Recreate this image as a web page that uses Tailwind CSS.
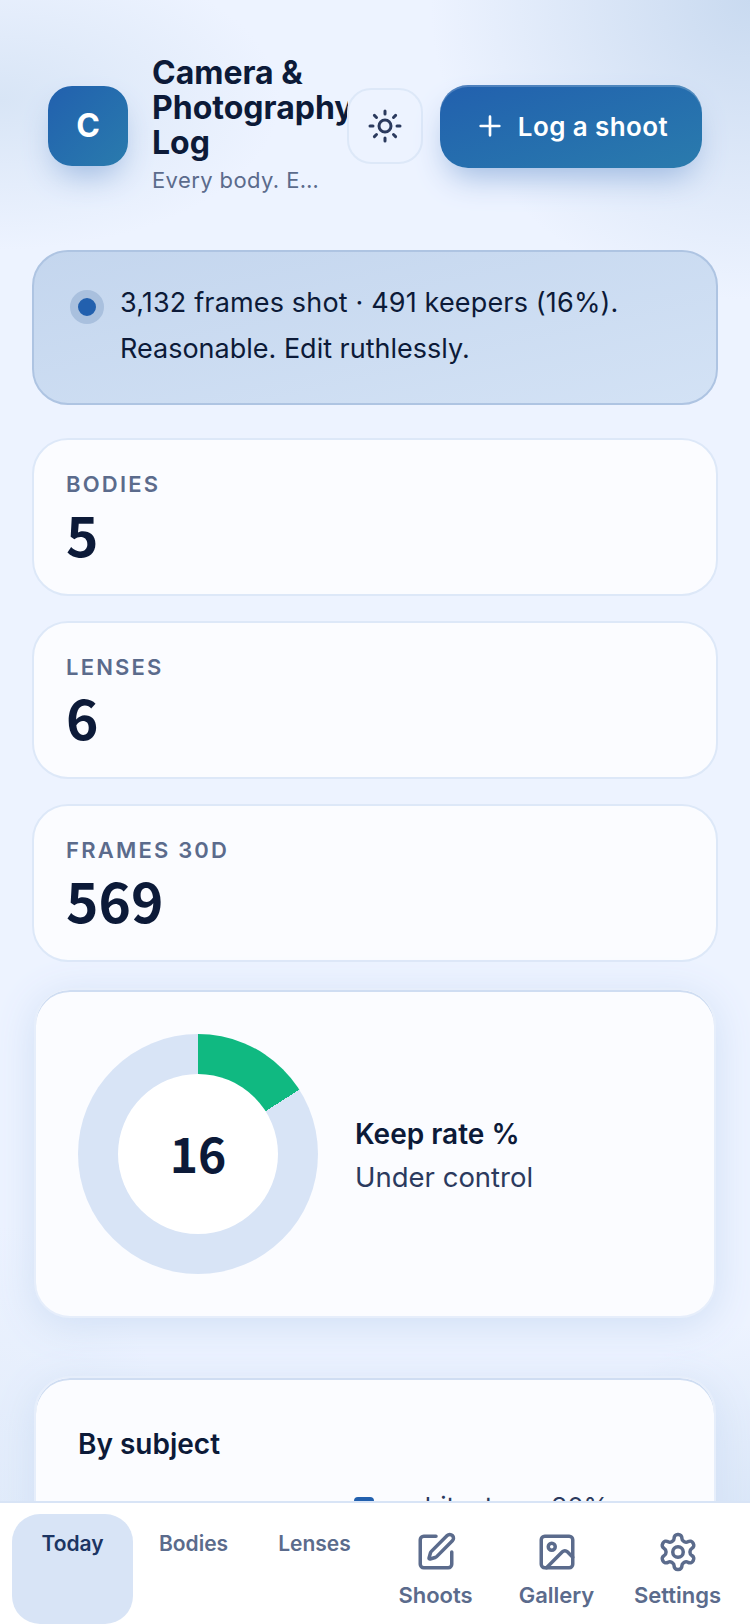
<!doctype html>
<html><head><meta charset="utf-8"><script src="https://cdn.jsdelivr.net/npm/@tailwindcss/browser@4"></script></head>
<body class="m-0">
<div class="relative w-[750px] h-[1624px] overflow-hidden bg-[#edf3ff] font-['Inter',sans-serif] text-[#0c1a38]">
  <div class="absolute inset-0 bg-[radial-gradient(320px_300px_at_100%_0%,#c9daf0_0%,#edf3ff00_100%),radial-gradient(280px_150px_at_0%_100px,#d8e5f6_0%,#edf3ff00_100%),radial-gradient(200px_300px_at_100%_100%,#cfdff3_0%,#edf3ff00_100%),radial-gradient(200px_400px_at_0%_100%,#dce8f8_0%,#edf3ff00_100%)]"></div>
  <main class="relative px-8 pt-[64px] flex flex-col">
    <header class="flex items-center h-[124px] pl-4">
      <div class="w-20 h-20 shrink-0 rounded-3xl bg-gradient-to-br from-[#2260ae] to-[#2a7bad] text-white flex items-center justify-center text-[32px] font-bold shadow-[0_16px_32px_-8px_#9cb8e0]">C</div>
      <div class="w-[196px] shrink-0 ml-6 overflow-hidden">
        <h1 class="text-[32px] leading-[35.2px] font-bold">Camera &amp; <span class="whitespace-nowrap">Photography</span> Log</h1>
        <p class="text-[22px] leading-[33px] tracking-[0.4px] text-[#5b6b8c] mt-1">Every body. E…</p>
      </div>
      <button class="w-[76px] h-[76px] shrink-0 -ml-[1px] rounded-3xl border-2 border-[#dde8f8] flex items-center justify-center text-[#2b3a5e]">
        <svg class="w-9 h-9" viewBox="0 0 24 24" fill="none" stroke="currentColor" stroke-width="2" stroke-linecap="round"><circle cx="12" cy="12" r="4"/><path d="M12 2v2M12 20v2M4.93 4.93l1.41 1.41M17.66 17.66l1.41 1.41M2 12h2M20 12h2M6.34 17.66l-1.41 1.41M19.07 4.93l-1.41 1.41"/></svg>
      </button>
      <button class="w-[262px] h-[83px] shrink-0 ml-[17px] rounded-[28px] bg-gradient-to-br from-[#2260ae] to-[#2a7bad] text-white flex items-center justify-center gap-3 text-[26px] tracking-[0.4px] font-semibold shadow-[inset_0_2px_0_#ffffff33,0_16px_32px_-8px_#9cb8e0]">
        <svg class="w-8 h-8" viewBox="0 0 24 24" fill="none" stroke="currentColor" stroke-width="2" stroke-linecap="round"><path d="M5 12h14M12 5v14"/></svg>
        <span>Log a shoot</span>
      </button>
    </header>
    <section class="mt-[62px] h-[155px] rounded-[36px] border-2 border-[#aec4e2] bg-gradient-to-br from-[#c4d6ee] to-[#d3e2f5] pl-[36px] pr-8 pt-[28px] flex gap-4">
      <span class="w-[34px] h-[34px] mt-[10px] shrink-0 rounded-full bg-[#2260ae] border-[8px] border-[#a9c0de]"></span>
      <p class="text-[27px] leading-[46px]"><span class="tracking-[0.16px]">3,132 frames shot · 491 keepers (16%).</span> Reasonable. Edit ruthlessly.</p>
    </section>
    <section class="mt-[33px] flex flex-col gap-[25px]">
      <div class="h-[158px] rounded-[36px] border-2 border-[#dde8f8] bg-[#fbfcff] px-8 pt-[30px]">
        <div class="text-[22px] leading-[28px] font-semibold tracking-[2.2px] text-[#5b6b8c]">BODIES</div>
        <div class="font-['Noto_Sans_CJK_SC',sans-serif] text-[55px] leading-[70px] font-bold">5</div>
      </div>
      <div class="h-[158px] rounded-[36px] border-2 border-[#dde8f8] bg-[#fbfcff] px-8 pt-[30px]">
        <div class="text-[22px] leading-[28px] font-semibold tracking-[2.2px] text-[#5b6b8c]">LENSES</div>
        <div class="font-['Noto_Sans_CJK_SC',sans-serif] text-[55px] leading-[70px] font-bold">6</div>
      </div>
      <div class="h-[158px] rounded-[36px] border-2 border-[#dde8f8] bg-[#fbfcff] px-8 pt-[30px]">
        <div class="text-[22px] leading-[28px] font-semibold tracking-[2.2px] text-[#5b6b8c]">FRAMES 30D</div>
        <div class="font-['Noto_Sans_CJK_SC',sans-serif] text-[55px] leading-[70px] font-bold">569</div>
      </div>
    </section>
    <section class="mt-[26px] mx-[2px] h-[330px] rounded-[36px] bg-[#fbfcff] border-2 border-[#e6eefb] pt-[2px] shadow-[inset_0_2px_0_#cfddf2,0_8px_40px_#d0dff5] flex items-center pl-[42px] gap-[37px]">
      <div class="w-60 h-60 rounded-full shrink-0 bg-[conic-gradient(#10b981_0_16%,#d8e4f6_16%_100%)] flex items-center justify-center">
        <div class="w-40 h-40 rounded-full bg-white flex items-center justify-center font-['Noto_Sans_CJK_SC',sans-serif] text-[48px] leading-[48px] pb-1 font-bold">16</div>
      </div>
      <div class="mt-[3px]">
        <div class="text-[28px] leading-[43px] font-semibold">Keep rate %</div>
        <div class="text-[27.5px] leading-[43px] text-[#2b3a5e]">Under control</div>
      </div>
    </section>
    <section class="mt-[58px] mx-[2px] h-[400px] rounded-[36px] bg-[#fbfcff] border-2 border-[#e6eefb] shadow-[inset_0_2px_0_#cfddf2,0_8px_40px_#d0dff5] pl-[42px] pt-[48px]">
      <h2 class="text-[28px] leading-[36px] font-semibold">By subject</h2>
      <div class="ml-[276px] mt-[28px] flex items-center text-[26px] leading-[34px] text-[#2b3a5e]">
        <span class="w-5 h-5 rounded bg-[#2260ae] mr-3"></span><span>architecture</span><span class="ml-[18px]">30%</span>
      </div>
    </section>
  </main>
  <nav class="absolute left-0 right-0 bottom-0 h-[123px] bg-white border-t-2 border-[#d8e4f6] px-3 pt-[11px] flex font-semibold text-[#5b6b8c]">
    <div class="w-[121px] h-[110px] rounded-[28px] bg-[#d8e4f6] text-[#1c3563] text-center text-[21px] pt-[16px] leading-[28px]">Today</div>
    <div class="w-[121px] text-center text-[21px] pt-[16px] leading-[28px]">Bodies</div>
    <div class="w-[121px] text-center text-[21px] pt-[16px] leading-[28px]">Lenses</div>
    <div class="w-[121px] flex flex-col items-center pt-[17px] text-[22px]">
      <svg class="w-[42px] h-[42px]" viewBox="0 0 24 24" fill="none" stroke="currentColor" stroke-width="2" stroke-linecap="round" stroke-linejoin="round"><path d="M12 3H5a2 2 0 0 0-2 2v14a2 2 0 0 0 2 2h14a2 2 0 0 0 2-2v-7"/><path d="M18.375 2.625a1 1 0 0 1 3 3l-9.013 9.014a2 2 0 0 1-.853.505l-2.873.84a.5.5 0 0 1-.62-.62l.84-2.873a2 2 0 0 1 .506-.852z"/></svg>
      <span class="mt-2 leading-[28px]">Shoots</span>
    </div>
    <div class="w-[121px] flex flex-col items-center pt-[17px] text-[22px]">
      <svg class="w-[42px] h-[42px]" viewBox="0 0 24 24" fill="none" stroke="currentColor" stroke-width="2" stroke-linecap="round" stroke-linejoin="round"><rect x="3" y="3" width="18" height="18" rx="2"/><circle cx="9" cy="9" r="2"/><path d="m21 15-3.086-3.086a2 2 0 0 0-2.828 0L6 21"/></svg>
      <span class="mt-2 leading-[28px]">Gallery</span>
    </div>
    <div class="w-[121px] flex flex-col items-center pt-[17px] text-[22px]">
      <svg class="w-[42px] h-[42px]" viewBox="0 0 24 24" fill="none" stroke="currentColor" stroke-width="2" stroke-linecap="round" stroke-linejoin="round"><path d="M12.22 2h-.44a2 2 0 0 0-2 2v.18a2 2 0 0 1-1 1.73l-.43.25a2 2 0 0 1-2 0l-.15-.08a2 2 0 0 0-2.73.73l-.22.38a2 2 0 0 0 .73 2.73l.15.1a2 2 0 0 1 1 1.72v.51a2 2 0 0 1-1 1.74l-.15.09a2 2 0 0 0-.73 2.73l.22.38a2 2 0 0 0 2.73.73l.15-.08a2 2 0 0 1 2 0l.43.25a2 2 0 0 1 1 1.73V20a2 2 0 0 0 2 2h.44a2 2 0 0 0 2-2v-.18a2 2 0 0 1 1-1.73l.43-.25a2 2 0 0 1 2 0l.15.08a2 2 0 0 0 2.73-.73l.22-.39a2 2 0 0 0-.73-2.73l-.15-.08a2 2 0 0 1-1-1.74v-.5a2 2 0 0 1 1-1.74l.15-.09a2 2 0 0 0 .73-2.73l-.22-.38a2 2 0 0 0-2.73-.73l-.15.08a2 2 0 0 1-2 0l-.43-.25a2 2 0 0 1-1-1.73V4a2 2 0 0 0-2-2z"/><circle cx="12" cy="12" r="3"/></svg>
      <span class="mt-2 leading-[28px]">Settings</span>
    </div>
  </nav>
</div>
</body></html>
